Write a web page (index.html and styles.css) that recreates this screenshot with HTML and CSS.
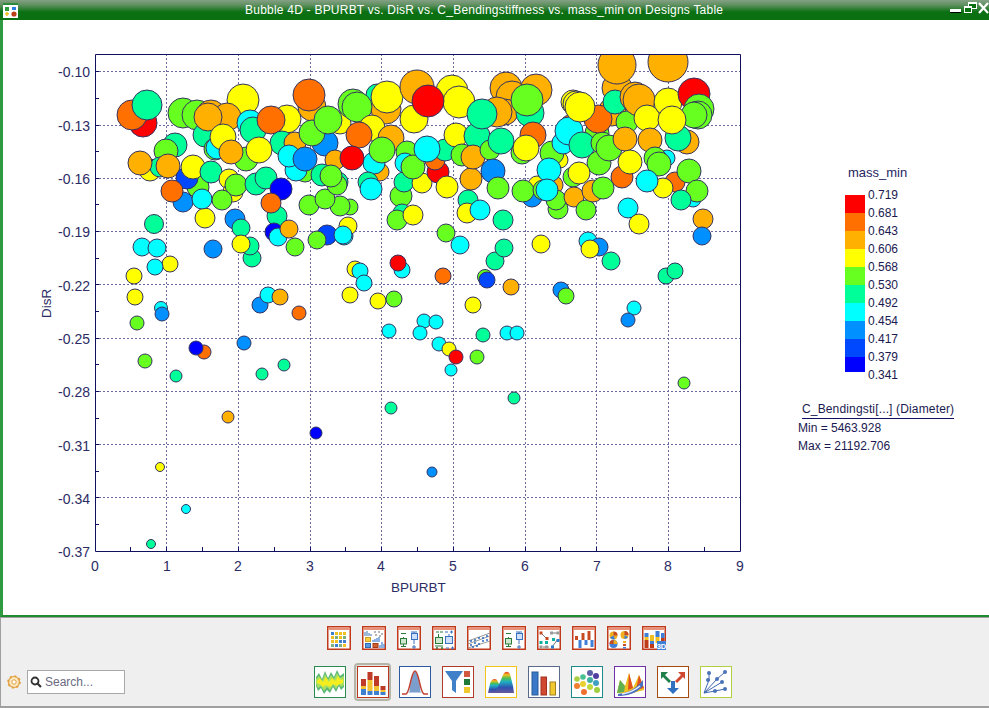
FILE: index.html
```html
<!DOCTYPE html>
<html lang="en">
<head>
<meta charset="utf-8">
<title>Bubble 4D</title>
<link rel="stylesheet" href="styles.css">
</head>
<body>
<div class="window">
  <header class="titlebar">
    <svg class="appicon" viewBox="0 0 15 15" width="15" height="15"><rect width="15" height="15" fill="#fff"/><rect width="15" height="2" fill="#2c8a3a"/><rect x="2" y="4" width="4" height="4" fill="#2e9a3e"/><rect x="9" y="4" width="4" height="3" fill="#2a7fe0"/><rect x="2" y="10" width="4" height="1.5" fill="#f0c020"/><rect x="3.2" y="9" width="1.5" height="4" fill="#f0c020"/><circle cx="11" cy="11" r="2.6" fill="#b8401a"/></svg>
    <span class="title">Bubble 4D - BPURBT vs. DisR vs. C_Bendingstiffness vs. mass_min on Designs Table</span>
    <svg class="winbtns" viewBox="0 0 39 13" width="39" height="13"><rect x="0" y="7" width="11" height="3" fill="#fff"/><rect x="0" y="10" width="11" height="1" fill="#000"/><rect x="18.5" y="0.5" width="8" height="6" fill="#0a7012" stroke="#fff"/><rect x="18" y="0" width="9" height="2" fill="#fff"/><rect x="14.5" y="4.5" width="7" height="6" fill="#0a7012" stroke="#fff"/><rect x="14" y="4" width="8" height="2" fill="#fff"/><path d="M29 1 L38 11 M38 1 L29 11" stroke="#fff" stroke-width="2.2"/></svg>
  </header>
  <main class="chartpanel">
    <svg class="chart" viewBox="3 20 986 595" width="986" height="595">
      <defs><clipPath id="plot"><rect x="95" y="54" width="646" height="498"/></clipPath></defs>
      <g class="grid">
        <path d="M95 71.5H740M95 125.5H740M95 178.5H740M95 231.5H740M95 284.5H740M95 338.5H740M95 391.5H740M95 444.5H740M95 497.5H740"/>
        <path d="M166.5 54V551M238.5 54V551M310.5 54V551M381.5 54V551M453.5 54V551M525.5 54V551M596.5 54V551M668.5 54V551"/>
      </g>
      <g class="bubbles" clip-path="url(#plot)">
        <circle class="m" cx="151" cy="544" r="4.5"/><circle class="c" cx="186" cy="509" r="4.5"/><circle class="y" cx="160" cy="467" r="4.5"/><circle class="b" cx="228" cy="417" r="6"/><circle class="e" cx="316" cy="433" r="6"/><circle class="m" cx="176" cy="376" r="6"/><circle class="m" cx="262" cy="374" r="6"/><circle class="m" cx="284" cy="365" r="6"/><circle class="l" cx="145" cy="361" r="7"/><circle class="a" cx="204" cy="352" r="7"/><circle class="e" cx="196" cy="348" r="7"/><circle class="z" cx="244" cy="343" r="7"/><circle class="l" cx="137" cy="323" r="7"/><circle class="c" cx="161" cy="308" r="6.5"/><circle class="z" cx="162" cy="314" r="7"/><circle class="a" cx="299" cy="313" r="7"/><circle class="z" cx="260" cy="305" r="8"/><circle class="c" cx="268" cy="295" r="8"/><circle class="b" cx="280" cy="297" r="8"/><circle class="y" cx="135" cy="297" r="8"/><circle class="y" cx="134" cy="276" r="8"/><circle class="y" cx="170" cy="264" r="8"/><circle class="c" cx="155" cy="267" r="8"/><circle class="c" cx="142" cy="247" r="9"/><circle class="c" cx="157" cy="248" r="9"/><circle class="z" cx="213" cy="249" r="9"/>
        <circle class="m" cx="154" cy="224" r="9.5"/><circle class="y" cx="205" cy="218" r="10"/><circle class="z" cx="235" cy="219" r="10"/><circle class="m" cx="241" cy="228" r="9"/><circle class="m" cx="252" cy="258" r="9"/><circle class="m" cx="250" cy="246" r="9"/><circle class="y" cx="241" cy="244" r="9"/><circle class="m" cx="277" cy="216" r="10"/><circle class="e" cx="274" cy="232" r="9"/><circle class="c" cx="278" cy="237" r="9"/><circle class="b" cx="289" cy="229" r="9"/><circle class="l" cx="295" cy="247" r="9"/><circle class="d" cx="327" cy="235" r="10"/><circle class="l" cx="317" cy="240" r="9"/><circle class="c" cx="344" cy="236" r="9"/>
        <circle class="y" cx="355" cy="269" r="8"/><circle class="c" cx="360" cy="271" r="8"/><circle class="c" cx="364" cy="283" r="8"/><circle class="y" cx="350" cy="295" r="8"/><circle class="y" cx="378" cy="301" r="8"/><circle class="l" cx="394" cy="299" r="8"/><circle class="c" cx="389" cy="331" r="7"/><circle class="c" cx="402" cy="270" r="8"/><circle class="r" cx="398" cy="263" r="8"/><circle class="c" cx="424" cy="321" r="7"/><circle class="c" cx="436" cy="322" r="7"/><circle class="c" cx="420" cy="333" r="7"/><circle class="c" cx="439" cy="344" r="7"/><circle class="y" cx="449" cy="349" r="7"/><circle class="c" cx="451" cy="370" r="6"/><circle class="r" cx="456" cy="357" r="7"/><circle class="l" cx="477" cy="357" r="7"/><circle class="m" cx="483" cy="335" r="7"/><circle class="y" cx="473" cy="305" r="8"/><circle class="a" cx="443" cy="276" r="8"/><circle class="l" cx="485" cy="277" r="7.5"/><circle class="d" cx="487" cy="280" r="8"/><circle class="b" cx="511" cy="287" r="8"/><circle class="c" cx="507" cy="333" r="7"/><circle class="c" cx="517" cy="333" r="7"/><circle class="m" cx="514" cy="398" r="6"/><circle class="m" cx="391" cy="408" r="6"/><circle class="z" cx="432" cy="472" r="5"/><circle class="l" cx="684" cy="383" r="6"/><circle class="z" cx="561" cy="290" r="8"/><circle class="l" cx="566" cy="296" r="8"/><circle class="c" cx="634" cy="308" r="7"/><circle class="z" cx="628" cy="320" r="7"/><circle class="m" cx="666" cy="276" r="8"/><circle class="m" cx="675" cy="271" r="8"/><circle class="m" cx="611" cy="261" r="9"/><circle class="c" cx="588" cy="241" r="9"/><circle class="z" cx="599" cy="247" r="9"/><circle class="y" cx="590" cy="249" r="9"/><circle class="y" cx="541" cy="244" r="9"/><circle class="l" cx="446" cy="233" r="9"/><circle class="c" cx="460" cy="245" r="9"/><circle class="m" cx="495" cy="261" r="9"/><circle class="m" cx="504" cy="248" r="9"/>
        <circle class="c" cx="628" cy="208" r="10"/><circle class="y" cx="639" cy="224" r="10"/><circle class="b" cx="703" cy="219" r="10"/><circle class="z" cx="702" cy="236" r="9"/><circle class="m" cx="468" cy="200" r="10"/><circle class="y" cx="467" cy="213" r="10"/><circle class="c" cx="480" cy="210" r="10"/><circle class="m" cx="503" cy="220" r="10"/><circle class="l" cx="401" cy="196" r="11"/><circle class="m" cx="402" cy="213" r="9"/><circle class="l" cx="397" cy="220" r="10"/><circle class="y" cx="413" cy="215" r="10"/><circle class="l" cx="350" cy="207" r="8"/><circle class="l" cx="340" cy="206" r="10"/><circle class="y" cx="348" cy="226" r="9"/><circle class="c" cx="343" cy="235" r="9"/>
        <circle class="l" cx="183" cy="113" r="15"/><circle class="r" cx="143" cy="123" r="14"/><circle class="a" cx="132" cy="115" r="15"/><circle class="m" cx="147" cy="105" r="15"/><circle class="l" cx="197" cy="115" r="15"/><circle class="b" cx="211" cy="115" r="15"/><circle class="m" cx="205" cy="135" r="12"/><circle class="y" cx="243" cy="100" r="16"/><circle class="b" cx="227" cy="117" r="14"/><circle class="b" cx="208" cy="117" r="14"/><circle class="c" cx="250" cy="123" r="13"/><circle class="m" cx="253" cy="130" r="13"/><circle class="y" cx="287" cy="119" r="14"/><circle class="a" cx="271" cy="120" r="14"/><circle class="b" cx="312" cy="107" r="14"/><circle class="a" cx="309" cy="95" r="16"/><circle class="l" cx="215" cy="149" r="11"/><circle class="c" cx="217" cy="148" r="11"/><circle class="y" cx="223" cy="137" r="13"/><circle class="m" cx="282" cy="143" r="12"/><circle class="l" cx="246" cy="159" r="12"/><circle class="b" cx="231" cy="152" r="12"/><circle class="y" cx="259" cy="150" r="13"/><circle class="m" cx="175" cy="145" r="12"/><circle class="l" cx="166" cy="151" r="12"/><circle class="y" cx="150" cy="170" r="11"/><circle class="m" cx="160" cy="167" r="10"/><circle class="b" cx="168" cy="166" r="12"/><circle class="b" cx="140" cy="163" r="12"/><circle class="l" cx="198" cy="187" r="11"/><circle class="d" cx="187" cy="178" r="11"/><circle class="y" cx="193" cy="167" r="12"/><circle class="m" cx="211" cy="172" r="11"/><circle class="y" cx="229" cy="179" r="10"/><circle class="y" cx="233" cy="192" r="10"/><circle class="l" cx="236" cy="185" r="11"/><circle class="m" cx="256" cy="184" r="11"/><circle class="m" cx="266" cy="178" r="11"/><circle class="e" cx="281" cy="189" r="11"/><circle class="z" cx="183" cy="202" r="10"/><circle class="a" cx="172" cy="191" r="11"/><circle class="c" cx="202" cy="199" r="10"/><circle class="l" cx="222" cy="200" r="10"/><circle class="a" cx="271" cy="203" r="10"/><circle class="l" cx="309" cy="205" r="10"/><circle class="l" cx="325" cy="199" r="10"/>
        <circle class="l" cx="305" cy="172" r="10"/><circle class="c" cx="296" cy="170" r="11"/><circle class="b" cx="295" cy="143" r="11"/><circle class="c" cx="289" cy="156" r="11"/><circle class="z" cx="325" cy="143" r="13"/><circle class="l" cx="312" cy="133" r="13"/><circle class="z" cx="305" cy="159" r="12"/><circle class="y" cx="340" cy="123" r="11"/><circle class="l" cx="328" cy="120" r="14"/><circle class="b" cx="335" cy="160" r="10"/><circle class="m" cx="322" cy="175" r="11"/><circle class="m" cx="338" cy="182" r="10"/><circle class="l" cx="337" cy="185" r="10"/><circle class="l" cx="331" cy="176" r="11"/>
        <circle class="m" cx="377" cy="95" r="11"/><circle class="b" cx="386" cy="109" r="15"/><circle class="l" cx="353" cy="104" r="15"/><circle class="l" cx="357" cy="107" r="15"/><circle class="y" cx="387" cy="97" r="16"/><circle class="y" cx="372" cy="128" r="13"/><circle class="a" cx="359" cy="135" r="13"/><circle class="b" cx="391" cy="138" r="13"/><circle class="b" cx="380" cy="172" r="9"/><circle class="c" cx="374" cy="163" r="11"/><circle class="l" cx="382" cy="150" r="13"/><circle class="r" cx="352" cy="158" r="12"/><circle class="m" cx="368" cy="182" r="10"/><circle class="c" cx="371" cy="189" r="11"/>
        <circle class="b" cx="417" cy="87" r="17"/><circle class="y" cx="452" cy="91" r="16"/><circle class="y" cx="414" cy="119" r="14"/><circle class="y" cx="459" cy="102" r="16"/><circle class="r" cx="428" cy="101" r="16"/><circle class="l" cx="407" cy="152" r="11"/><circle class="c" cx="405" cy="163" r="10"/><circle class="m" cx="404" cy="182" r="10"/><circle class="y" cx="422" cy="183" r="10"/><circle class="l" cx="413" cy="167" r="12"/><circle class="r" cx="438" cy="172" r="11"/><circle class="a" cx="435" cy="160" r="10"/><circle class="m" cx="445" cy="150" r="11"/><circle class="c" cx="427" cy="149" r="13"/><circle class="y" cx="447" cy="187" r="11"/><circle class="y" cx="456" cy="135" r="12"/><circle class="l" cx="462" cy="155" r="11"/><circle class="b" cx="471" cy="179" r="11"/><circle class="m" cx="477" cy="136" r="13"/><circle class="b" cx="473" cy="157" r="12"/><circle class="l" cx="490" cy="150" r="10"/><circle class="m" cx="501" cy="141" r="13"/><circle class="z" cx="493" cy="171" r="12"/><circle class="l" cx="498" cy="188" r="11"/>
        <circle class="b" cx="506" cy="88" r="16"/><circle class="b" cx="536" cy="90" r="16"/><circle class="b" cx="512" cy="97" r="16"/><circle class="b" cx="505" cy="112" r="13"/><circle class="b" cx="497" cy="112" r="15"/><circle class="m" cx="482" cy="114" r="15"/><circle class="m" cx="530" cy="113" r="14"/><circle class="l" cx="527" cy="100" r="16"/><circle class="a" cx="533" cy="135" r="13"/><circle class="z" cx="522" cy="152" r="10"/><circle class="l" cx="522" cy="153" r="11"/><circle class="y" cx="526" cy="148" r="13"/><circle class="y" cx="560" cy="160" r="8"/><circle class="l" cx="552" cy="153" r="12"/><circle class="z" cx="532" cy="197" r="10"/><circle class="y" cx="537" cy="185" r="9"/><circle class="l" cx="523" cy="191" r="11"/><circle class="b" cx="554" cy="185" r="9"/><circle class="l" cx="543" cy="190" r="10"/><circle class="c" cx="549" cy="170" r="12"/><circle class="l" cx="558" cy="209" r="10"/><circle class="l" cx="556" cy="200" r="10"/><circle class="c" cx="547" cy="190" r="11"/>
        <circle class="c" cx="563" cy="143" r="11"/><circle class="a" cx="570" cy="125" r="10"/><circle class="l" cx="597" cy="133" r="12"/><circle class="c" cx="569" cy="131" r="14"/><circle class="m" cx="582" cy="145" r="13"/><circle class="l" cx="602" cy="143" r="11"/><circle class="l" cx="599" cy="163" r="12"/><circle class="l" cx="609" cy="148" r="13"/><circle class="y" cx="573" cy="102" r="12"/><circle class="y" cx="576" cy="104" r="13"/><circle class="b" cx="617" cy="88" r="15"/><circle class="b" cx="612" cy="112" r="14"/><circle class="a" cx="598" cy="119" r="14"/><circle class="y" cx="580" cy="107" r="15"/><circle class="b" cx="617" cy="65" r="19"/><circle class="b" cx="668" cy="62" r="20"/><circle class="m" cx="615" cy="102" r="12"/><circle class="l" cx="627" cy="122" r="11"/><circle class="b" cx="635" cy="97" r="15"/><circle class="b" cx="639" cy="100" r="16"/><circle class="y" cx="647" cy="118" r="13"/><circle class="y" cx="668" cy="102" r="14"/><circle class="r" cx="694" cy="94" r="16"/><circle class="b" cx="687" cy="142" r="12"/><circle class="m" cx="678" cy="138" r="13"/><circle class="l" cx="699" cy="109" r="15"/><circle class="l" cx="698" cy="115" r="14"/><circle class="l" cx="694" cy="115" r="13"/><circle class="y" cx="672" cy="120" r="14"/><circle class="b" cx="625" cy="139" r="12"/><circle class="b" cx="650" cy="140" r="12"/><circle class="c" cx="667" cy="158" r="8"/><circle class="l" cx="655" cy="158" r="11"/><circle class="l" cx="659" cy="164" r="12"/><circle class="a" cx="622" cy="177" r="11"/><circle class="y" cx="630" cy="162" r="12"/><circle class="a" cx="675" cy="182" r="10"/><circle class="y" cx="663" cy="188" r="10"/><circle class="c" cx="647" cy="181" r="11"/><circle class="l" cx="689" cy="171" r="12"/><circle class="c" cx="693" cy="199" r="8"/><circle class="l" cx="697" cy="191" r="11"/><circle class="m" cx="681" cy="200" r="10"/><circle class="l" cx="573" cy="177" r="10"/><circle class="b" cx="574" cy="197" r="10"/><circle class="y" cx="579" cy="173" r="11"/><circle class="l" cx="586" cy="210" r="10"/><circle class="b" cx="593" cy="191" r="11"/><circle class="l" cx="603" cy="188" r="11"/>
      </g>
      <g class="axis">
        <path d="M95.5 54.5H740.5V551.5H95.5Z"/>
        <path d="M95 71.5h4M95 98.5h4M95 125.5h4M95 151.5h4M95 178.5h4M95 204.5h4M95 231.5h4M95 258.5h4M95 284.5h4M95 311.5h4M95 338.5h4M95 364.5h4M95 391.5h4M95 418.5h4M95 444.5h4M95 471.5h4M95 497.5h4M95 524.5h4"/>
        <path d="M130.5 551v-4M166.5 551v-4M202.5 551v-4M238.5 551v-4M274.5 551v-4M310.5 551v-4M345.5 551v-4M381.5 551v-4M417.5 551v-4M453.5 551v-4M489.5 551v-4M525.5 551v-4M560.5 551v-4M596.5 551v-4M632.5 551v-4M668.5 551v-4M704.5 551v-4"/>
      </g>
      <g class="ticks end">
        <text x="90" y="77">-0.10</text><text x="90" y="131">-0.13</text><text x="90" y="184">-0.16</text><text x="90" y="237">-0.19</text><text x="90" y="291">-0.22</text><text x="90" y="344">-0.25</text><text x="90" y="397">-0.28</text><text x="90" y="451">-0.31</text><text x="90" y="504">-0.34</text><text x="90" y="557">-0.37</text>
      </g>
      <g class="ticks mid">
        <text x="95" y="571">0</text><text x="167" y="571">1</text><text x="238" y="571">2</text><text x="310" y="571">3</text><text x="381" y="571">4</text><text x="453" y="571">5</text><text x="525" y="571">6</text><text x="597" y="571">7</text><text x="668" y="571">8</text><text x="740" y="571">9</text>
      </g>
      <text class="axistitle" x="391" y="592">BPURBT</text>
      <text class="axistitle" transform="translate(51 318) rotate(-90)">DisR</text>
      <text class="legendtitle" x="848" y="177">mass_min</text>
      <g>
        <rect class="r" x="845" y="195" width="20" height="18"/><rect class="a" x="845" y="213" width="20" height="18"/><rect class="b" x="845" y="231" width="20" height="18"/><rect class="y" x="845" y="249" width="20" height="18"/><rect class="l" x="845" y="267" width="20" height="18"/><rect class="m" x="845" y="285" width="20" height="18"/><rect class="c" x="845" y="303" width="20" height="18"/><rect class="z" x="845" y="321" width="20" height="18"/><rect class="d" x="845" y="339" width="20" height="18"/><rect class="e" x="845" y="357" width="20" height="15"/>
      </g>
      <g class="legendtext">
        <text x="868" y="199">0.719</text><text x="868" y="217">0.681</text><text x="868" y="235">0.643</text><text x="868" y="253">0.606</text><text x="868" y="271">0.568</text><text x="868" y="289">0.530</text><text x="868" y="307">0.492</text><text x="868" y="325">0.454</text><text x="868" y="343">0.417</text><text x="868" y="361">0.379</text><text x="868" y="379">0.341</text>
        <text class="dia" x="802" y="413">C_Bendingsti[...] (Diameter)</text>
        <text x="798" y="432">Min = 5463.928</text>
        <text x="798" y="450">Max = 21192.706</text>
      </g>
      <path class="rule" d="M802 418.5H954"/>
    </svg>
  </main>
  <footer class="toolbar">
    <div class="row-top">
      <svg class="tool" viewBox="0 0 24 24" width="24" height="24"><rect class="fr" x=".75" y=".75" width="22.5" height="22.5"/><rect class="hd" x="1.5" y="1.5" width="21" height="2.5"/><g fill="#3f7fd0"><rect x="4" y="6" width="3" height="3"/><rect x="16" y="14" width="3" height="3"/><rect x="12" y="14" width="3" height="3"/></g><g fill="#f0c020"><rect x="8" y="6" width="3" height="3"/><rect x="12" y="6" width="3" height="3"/><rect x="16" y="6" width="3" height="3"/><rect x="4" y="10" width="3" height="3"/><rect x="8" y="14" width="3" height="3"/><rect x="4" y="14" width="3" height="3"/><rect x="12" y="10" width="3" height="3"/></g><g fill="#7fae7f"><rect x="8" y="10" width="3" height="3"/><rect x="16" y="10" width="3" height="3"/><rect x="4" y="18" width="3" height="3"/><rect x="12" y="18" width="3" height="3"/></g><g fill="#3f7fd0"><rect x="8" y="18" width="3" height="3"/></g><rect x="16" y="18" width="3" height="3" fill="#f0c020"/></svg>
      <svg class="tool" viewBox="0 0 24 24" width="24" height="24"><rect class="fr" x=".75" y=".75" width="22.5" height="22.5"/><rect class="hd" x="1.5" y="1.5" width="21" height="2.5"/><path d="M3 10V6M5 10V5M7 10V7M9 10V8" stroke="#5a8ac0" stroke-width="1.2"/><path d="M12 6h2M16 6h2M19 8h2M13 9h2M17 10h2" stroke="#a0a0a0" stroke-width="1.5"/><rect x="3.5" y="11.5" width="5" height="4" fill="#f6d040" stroke="#d0a020"/><path d="M11 16v-2M13 16v-3M15 16v-4M17 16v-5" stroke="#3f7fd0" stroke-width="1.2"/><rect x="3.5" y="17.5" width="5" height="4" fill="#5a9ae0" stroke="#2a6ab0"/><rect x="11" y="17.5" width="5" height="4" fill="#d06030" stroke="#a03a18"/><path d="M18 22v-3M20 22v-6M22 22v-4" stroke="#3f7fd0" stroke-width="1.2"/></svg>
      <svg class="tool" viewBox="0 0 24 24" width="24" height="24"><rect class="fr" x=".75" y=".75" width="22.5" height="22.5"/><rect class="hd" x="1.5" y="1.5" width="21" height="2.5"/><path d="M4 7.500h5M6.500 11v10M4 20.500h5" stroke="#2a7a3a"/><rect x="3.500" y="12.500" width="6" height="5.500" fill="#cfe8cf" stroke="#2a7a3a"/><path d="M14 6h6M17 6v12M15 21h4M17 19v4" stroke="#3a70c0"/><rect x="14.500" y="7.500" width="6" height="6" fill="#cfe0f8" stroke="#3a70c0"/></svg>
      <svg class="tool" viewBox="0 0 24 24" width="24" height="24"><rect class="fr" x=".75" y=".75" width="22.5" height="22.5"/><rect class="hd" x="1.5" y="1.5" width="21" height="2.5"/><path d="M4 6h3M8 6h3M6.500 8v4M3 20h8M4 22h2M5 21v2M9 22h2M10 21v2" stroke="#2a7a3a"/><rect x="3.500" y="11.500" width="7" height="6" fill="#cfe8cf" stroke="#2a7a3a"/><path d="M13 6h3M18 6h3M19.500 4.500v3M17 8v3M14 22h3M19 22h3M20.500 20.500v3" stroke="#3a70c0"/><rect x="13.500" y="10.500" width="7" height="7" fill="#cfe0f8" stroke="#3a70c0"/></svg>
      <svg class="tool" viewBox="0 0 24 24" width="24" height="24"><rect class="fr" x=".75" y=".75" width="22.5" height="22.5"/><rect class="hd" x="1.500" y="1.500" width="21" height="2.500"/><path d="M1 15L23 7M1 18L23 10M1 22L23 15" stroke="#999" fill="none"/><path d="M3 15h2M7 14h2M11 12h2M15 12h2M19 10h2M3 19h2M7 17h2M11 18h2M15 15h2M19 14h2M5 21h2M9 20h2" stroke="#2a6ac0" stroke-width="1.600"/></svg>
      <svg class="tool" viewBox="0 0 24 24" width="24" height="24"><rect class="fr" x=".75" y=".75" width="22.5" height="22.5"/><rect class="hd" x="1.5" y="1.5" width="21" height="2.5"/><path d="M4 7.500h5M6.500 11v10M4 20.500h5" stroke="#2a7a3a"/><rect x="3.500" y="12.500" width="6" height="5.500" fill="#cfe8cf" stroke="#2a7a3a"/><path d="M14 6h6M17 6v12M15 21h4M17 19v4" stroke="#3a70c0"/><rect x="14.500" y="7.500" width="6" height="6" fill="#cfe0f8" stroke="#3a70c0"/></svg>
      <svg class="tool" viewBox="0 0 24 24" width="24" height="24"><rect class="fr" x=".75" y=".75" width="22.5" height="22.5"/><rect class="hd" x="1.5" y="1.5" width="21" height="2.5"/><path d="M4 7L10 13M14 7h7M6 21h6M15 21l6-8" stroke="#777" fill="none"/><rect x="2.500" y="5.500" width="3" height="3" fill="#c84a20"/><rect x="13" y="5.500" width="3" height="3" fill="#999"/><rect x="19.500" y="5.500" width="3" height="3" fill="#999"/><rect x="8.500" y="11" width="3" height="3" fill="#c84a20"/><rect x="15" y="12" width="3" height="3" fill="#10b0a0"/><rect x="2.500" y="15" width="3" height="3" fill="#10b0a0"/><rect x="8" y="15" width="3" height="3" fill="#10b0a0"/><rect x="2.500" y="19.500" width="3" height="3" fill="#999"/><rect x="8" y="19.500" width="3" height="3" fill="#999"/><rect x="19.500" y="13" width="3" height="3" fill="#2a7ad0"/><rect x="14" y="19.500" width="3" height="3" fill="#2a7ad0"/></svg>
      <svg class="tool" viewBox="0 0 24 24" width="24" height="24"><rect class="fr" x=".75" y=".75" width="22.5" height="22.5"/><rect class="hd" x="1.5" y="1.5" width="21" height="2.5"/><rect x="3" y="10" width="3" height="4" fill="#c84a20"/><rect x="6.500" y="14" width="3" height="8" fill="#3f7fd8"/><rect x="9.500" y="7" width="3" height="7" fill="#c84a20"/><rect x="12.500" y="14" width="3" height="5" fill="#3f7fd8"/><rect x="15.500" y="5" width="3" height="9" fill="#c84a20"/><rect x="18.500" y="14" width="3" height="7" fill="#3f7fd8"/></svg>
      <svg class="tool" viewBox="0 0 24 24" width="24" height="24"><rect class="fr" x=".75" y=".75" width="22.5" height="22.5"/><rect class="hd" x="1.5" y="1.5" width="21" height="2.5"/><circle cx="6.500" cy="9.500" r="4" fill="#f0b020"/><path d="M6.500 9.500V5.500A4 4 0 0 1 10.500 9.500Z" fill="#c84a20"/><path d="M6.500 9.500L3 11.500A4 4 0 0 0 8 13.200Z" fill="#3f7fd8"/><circle cx="17.500" cy="9" r="4" fill="#f0b020"/><path d="M17.500 9V5A4 4 0 0 1 21.500 9Z" fill="#c84a20"/><path d="M17.500 9L17.500 13A4 4 0 0 0 21 11Z" fill="#3f7fd8"/><circle cx="6.500" cy="18" r="4" fill="#3f7fd8"/><path d="M6.500 18V14A4 4 0 0 1 10.500 18Z" fill="#f0b020"/><path d="M6.500 18H2.500A4 4 0 0 1 6.500 14Z" fill="#c84a20"/><rect x="16" y="15" width="3" height="2" fill="#f0b020"/><rect x="16" y="18" width="3" height="2" fill="#c84a20"/><rect x="16" y="21" width="3" height="1.500" fill="#3f7fd8"/></svg>
      <svg class="tool" viewBox="0 0 24 24" width="24" height="24"><rect class="fr" x=".75" y=".75" width="22.5" height="22.5"/><rect class="hd" x="1.5" y="1.5" width="21" height="2.5"/><rect x="2.500" y="7" width="4" height="4" fill="#3f7fd8"/><rect x="2.500" y="11" width="4" height="3" fill="#f0c020"/><rect x="2.500" y="14" width="4" height="8" fill="#c03a18"/><rect x="8" y="9" width="4" height="6" fill="#f0c020"/><rect x="8" y="15" width="4" height="3" fill="#3f7fd8"/><rect x="8" y="18" width="4" height="4" fill="#c03a18"/><rect x="13.500" y="5" width="4" height="6" fill="#3f7fd8"/><rect x="13.500" y="11" width="4" height="6" fill="#f0c020"/><rect x="19" y="7" width="3.500" height="5" fill="#3f7fd8"/><rect x="19" y="12" width="3.500" height="5" fill="#c03a18"/><rect class="badge" x="15" y="15" width="9" height="9"/><text class="badgetext" x="19.500" y="23">3D</text></svg>
    </div>
    <div class="row-bottom">
      <div class="searchgroup">
        <svg class="gear" viewBox="0 0 14 14" width="14" height="14"><circle cx="7" cy="7" r="5.500" fill="#fbe8c0" stroke="#e0a040" stroke-width="1.200"/><circle cx="7" cy="7" r="5.800" fill="none" stroke="#e0a040" stroke-width="2" stroke-dasharray="2 2.500"/><circle cx="7" cy="7" r="2.200" fill="#fff" stroke="#e0a040"/></svg>
        <label class="search">
          <svg class="glass" viewBox="0 0 12 12" width="12" height="12"><circle cx="5" cy="5" r="3.500" fill="none" stroke="#333" stroke-width="1.800"/><path d="M7.500 7.500L11 11" stroke="#333" stroke-width="2.200"/></svg>
          <span class="placeholder">Search...</span>
        </label>
      </div>
      <div class="charts">
        <svg class="big" viewBox="0 0 32 32" width="32" height="32"><rect class="b1" x=".5" y=".5" width="31" height="31"/><path d="M2 11L5 7L8 13L11 5L14 12L17 6L20 11L23 4L26 10L30 7V21L27 24L25 20L22 26L19 21L16 27L13 24L10 28L7 22L4 25L2 20Z" fill="#5cb878"/><path d="M2 13L5 10L8 15L11 8L14 14L17 9L20 13L23 7L26 12L30 10V19L27 21L25 18L22 23L19 19L16 24L13 21L10 25L7 20L4 22L2 18Z" fill="#a8e060"/><path d="M3 15L6 12L9 16L12 11L15 16L18 12L21 15L24 10L27 14L29 13V17L26 18L23 20L19 18L16 21L12 19L9 21L6 18L3 17Z" fill="#f4ee20"/></svg>
        <div class="selected">
          <svg class="big" viewBox="0 0 32 32" width="32" height="32"><rect class="b2" x=".5" y=".5" width="31" height="31"/><rect x="4" y="13" width="5" height="7" fill="#c03a28"/><rect x="4" y="20" width="5" height="3" fill="#f2c230"/><rect x="4" y="23" width="5" height="6" fill="#3f7fd0"/><rect x="10.500" y="6" width="5" height="8" fill="#c03a28"/><rect x="10.500" y="14" width="5" height="11" fill="#f2c230"/><rect x="10.500" y="25" width="5" height="4" fill="#3f7fd0"/><rect x="17" y="10" width="5" height="10" fill="#c03a28"/><rect x="17" y="20" width="5" height="5" fill="#f2c230"/><rect x="17" y="25" width="5" height="4" fill="#3f7fd0"/><rect x="23.500" y="20" width="5" height="4" fill="#c03a28"/><rect x="23.500" y="24" width="5" height="2" fill="#f2c230"/><rect x="23.500" y="26" width="5" height="3" fill="#3f7fd0"/></svg>
        </div>
        <svg class="big" viewBox="0 0 32 32" width="32" height="32"><rect class="b3" x=".5" y=".5" width="31" height="31"/><path d="M9 27C12 24 13 5 16 5C19 5 20 24 23 27Z" fill="#b8cce8"/><path d="M12 26V14M14 26V8M16 26V5M18 26V8M20 26V14" stroke="#4070b0"/><path d="M3 28H7C11 27 12 5 16 5C20 5 21 27 25 28H29" fill="none" stroke="#c04030" stroke-width="1.500"/></svg>
        <svg class="big" viewBox="0 0 32 32" width="32" height="32"><rect class="b4" x=".5" y=".5" width="31" height="31"/><path d="M3 5H21L14 15V27L10 24V15Z" fill="#3f80c8"/><rect x="22" y="5" width="6" height="6" fill="#d05a40"/><rect x="22" y="13" width="6" height="6" fill="#1f7a3a"/><rect x="22" y="21" width="6" height="6" fill="#f0c830"/></svg>
        <svg class="big" viewBox="0 0 32 32" width="32" height="32"><defs><linearGradient id="rain" x1="0" y1="0" x2="0" y2="1"><stop offset="0" stop-color="#e03a20"/><stop offset=".14" stop-color="#f0c020"/><stop offset=".3" stop-color="#50c050"/><stop offset=".46" stop-color="#20b0c0"/><stop offset=".75" stop-color="#3050b0"/><stop offset="1" stop-color="#6a5a9a"/></linearGradient></defs><rect class="b5" x=".5" y=".5" width="31" height="31"/><path d="M3 27L5 18C6 13 10 12 12 14L14 18L16 27Z" fill="url(#rain)"/><path d="M10 27L15 16L18 9C20 5 23 5 25 8L28 20L29 27Z" fill="url(#rain)"/></svg>
        <svg class="big" viewBox="0 0 32 32" width="32" height="32"><rect class="b6" x=".5" y=".5" width="31" height="31"/><rect x="4" y="6" width="6" height="23" fill="#3a78c8" stroke="#285a9a"/><rect x="13" y="11" width="5.500" height="18" fill="#d04830" stroke="#a03020"/><rect x="22" y="16" width="5.500" height="13" fill="#f0c830" stroke="#a08020"/></svg>
        <svg class="big" viewBox="0 0 32 32" width="32" height="32"><rect class="b7" x=".5" y=".5" width="31" height="31"/><circle cx="19" cy="7" r="3" fill="#5a60a8"/><circle cx="25" cy="10" r="3" fill="#5040a0"/><circle cx="6" cy="13" r="2.800" fill="#a8d040"/><circle cx="12" cy="11" r="2.800" fill="#48c090"/><circle cx="19" cy="14" r="3" fill="#40b0a0"/><circle cx="25" cy="17" r="3" fill="#40a0c0"/><circle cx="6" cy="20" r="3" fill="#f08030"/><circle cx="12" cy="18" r="3" fill="#e8d030"/><circle cx="19" cy="21" r="3" fill="#c0d840"/><circle cx="26" cy="24" r="3" fill="#a0d040"/><circle cx="13" cy="26" r="3" fill="#f07030"/></svg>
        <svg class="big" viewBox="0 0 32 32" width="32" height="32"><rect class="b8" x=".5" y=".5" width="31" height="31"/><path d="M3 27L6 14L11 20L15 7L19 22L25 9L30 22V24L15 28Z" fill="#f0c020"/><path d="M3 27L6 14L11 20L10 26Z" fill="#60b050"/><path d="M15 7L19 22L14 24Z" fill="#e05020"/><path d="M25 9L30 22L22 24Z" fill="#e05020"/><path d="M4 28C12 27 20 25 29 14V20C22 28 12 30 4 30Z" fill="#4a70c0"/><path d="M8 28C14 27 20 25 26 20" stroke="#e8f0ff" stroke-width="1.500" fill="none"/></svg>
        <svg class="big" viewBox="0 0 32 32" width="32" height="32"><rect class="b9" x=".5" y=".5" width="31" height="31"/><path d="M14 15L8 9L11 6H4V13L6 11L12 17Z" fill="#1f7f4a"/><path d="M18 15L24 9L21 6H28V13L26 11L20 17Z" fill="#d04830"/><path d="M14 15H18V22H22L16 28L10 22H14Z" fill="#2f70c0"/></svg>
        <svg class="big" viewBox="0 0 32 32" width="32" height="32"><rect class="b10" x=".5" y=".5" width="31" height="31"/><path d="M4 27L9 14L9 6M4 27L17 13L25 6M4 27L15 25L25 23M4 27L22 16" stroke="#3f68b0" fill="none"/><g fill="#4a72b8"><circle cx="9" cy="7" r="2"/><circle cx="25" cy="6" r="2"/><circle cx="8" cy="14" r="2"/><circle cx="17" cy="13" r="2"/><circle cx="15" cy="25" r="2"/><circle cx="25" cy="23" r="2"/><circle cx="22" cy="16" r="2"/></g></svg>
      </div>
    </div>
  </footer>
</div>
</body>
</html>
```

FILE: styles.css
```css
* { box-sizing: border-box; }
html, body { margin: 0; padding: 0; }
body { background: #efefef; font-family: "Liberation Sans", Arial, sans-serif; }
.window { width: 989px; height: 708px; display: flex; flex-direction: column; overflow: hidden; }

.titlebar { height: 20px; flex: none; display: flex; align-items: center; padding-left: 3px; background: linear-gradient(#84a084 0, #5f9060 5px, #0a7012 12px, #0a7012 100%); color: #fff; }
.appicon { flex: none; }
.title { margin-left: 227px; font-size: 12px; letter-spacing: .225px; width: 705px; white-space: nowrap; }
.winbtns { flex: none; margin-top: -4px; }

.chartpanel { height: 597px; flex: none; background: #fff; border-left: 3px solid #2f9a40; border-bottom: 2px solid #1f8a30; }
.chart { display: block; }
.grid path { fill: none; stroke: #6a6aa0; stroke-width: 1; stroke-dasharray: 2 2; }
.axis path { fill: none; stroke: #101060; stroke-width: 1; }
.bubbles circle { stroke: #33335f; stroke-width: 1; }
.r { fill: #ff0000; } .a { fill: #ff7000; } .b { fill: #ffb000; } .y { fill: #ffff00; } .l { fill: #66ff1f; }
.m { fill: #00ff99; } .c { fill: #00ffff; } .z { fill: #0090ff; } .d { fill: #0048ff; } .e { fill: #0000ff; }
.ticks text, .axistitle { fill: #2c2c64; }
.ticks text { font-size: 14px; }
.axistitle { font-size: 13.5px; }
.end text { text-anchor: end; }
.mid text { text-anchor: middle; }
.legendtitle { font-size: 13px; fill: #25255f; }
.legendtext text { font-size: 12px; fill: #1a1a50; }
.legendtext .dia { letter-spacing: .15px; }
.rule { stroke: #101060; fill: none; }

.toolbar { flex: 1; border-top: 1px solid #a0a0a0; border-left: 1px solid #a0a0a0; border-bottom: 2px solid #a0a0a0; background: #efefef; display: flex; flex-direction: column; }
.row-top { display: flex; gap: 11px; padding: 8px 0 0 326px; }
.tool { display: block; flex: none; }
.fr { fill: #fff; stroke: #c0391b; stroke-width: 1.5; }
.hd { fill: #e89078; }
.badge { fill: #3f7fd8; }
.badgetext { font-size: 7.5px; font-weight: bold; fill: #fff; text-anchor: middle; }

.row-bottom { display: flex; align-items: center; padding: 16px 0 0 6px; }
.searchgroup { display: flex; align-items: center; gap: 6px; width: 119px; margin-top: -1px; flex: none; }
.gear { flex: none; }
.search { flex: none; width: 98px; height: 24px; background: #fff; border: 1px solid #a8a8a8; display: flex; align-items: center; gap: 3px; padding-left: 2px; }
.placeholder { font-size: 12px; color: #6a6a80; }
.charts { display: flex; align-items: center; gap: 11px; margin-left: 188px; }
.big { display: block; flex: none; background: #fff; }
.selected { width: 37px; height: 38px; margin: -3px -3px; display: flex; align-items: center; justify-content: center; border: 2px solid #b4b4a8; border-radius: 4px; background: #e4e4e0; }
.b1, .b2, .b3, .b4, .b5, .b6, .b7, .b8, .b9, .b10 { fill: #fff; stroke-width: 1; }
.b1 { stroke: #2a8a50; } .b2 { stroke: #b8351e; } .b3 { stroke: #2b5aa0; } .b4 { stroke: #b03a28; } .b5 { stroke: #f2c518; }
.b6 { stroke: #5a6a8a; } .b7 { stroke: #1a8a8a; } .b8 { stroke: #7030a8; } .b9 { stroke: #a84a10; } .b10 { stroke: #b0d040; }
```
